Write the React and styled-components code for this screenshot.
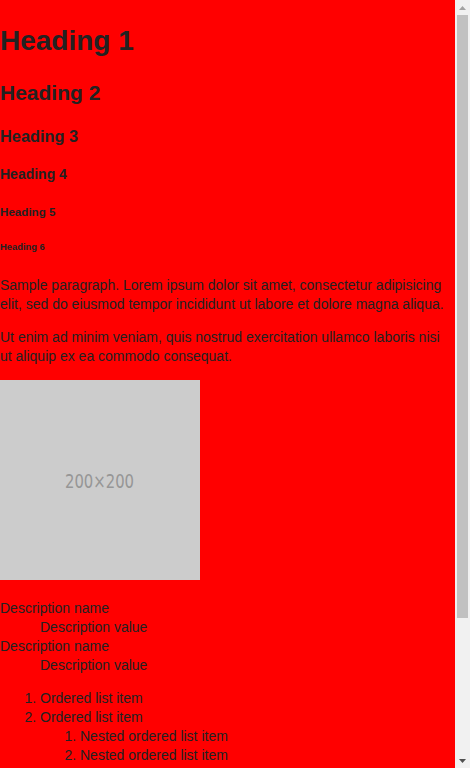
import styled, { createGlobalStyle } from 'styled-components';

const Global = createGlobalStyle`
  html, body { margin: 0; padding: 0; background: #f00; }
  body {
    font-family: "Liberation Sans", Arial, sans-serif;
    color: #222;
    font-size: 14px;
    line-height: 1.36;
  }
`;

// window frame: page content on the left, classic scrollbar on the right
const Frame = styled.div`
  display: flex;
  height: 100vh;
  overflow: hidden;
`;

const Page = styled.main`
  flex: 1;
  min-width: 0;
  overflow: hidden;
  padding-top: 3px;
  background: #f00;
`;

const ScrollBar = styled.div`
  width: 15px;
  flex: none;
  display: flex;
  flex-direction: column;
  background: #f1f1f1;
`;

const ArrowButton = styled.div`
  height: 15px;
  display: flex;
  align-items: center;
  justify-content: center;
  svg { display: block; }
`;

const Track = styled.div`
  flex: 1;
  display: flex;
  flex-direction: column;
`;

const Thumb = styled.div`
  height: 603px;
  margin: 0 2px;
  background: #c1c1c1;
`;

const Heading = styled.h1`font-weight: 700;`;

const Text = styled.p`margin: 1em 0;`;

const Placeholder = styled.svg`
  display: inline;
  vertical-align: baseline;
  text { font-family: "DejaVu Sans Condensed", "DejaVu Sans", sans-serif; }
`;

const DescList = styled.dl`margin: 1em 0;`;
const Term = styled.dt``;
const Detail = styled.dd`margin-left: 40px;`;

const OrderedList = styled.ol`
  margin: ${p => (p.$nested ? '0' : '1em 0')};
  padding-left: 40px;
`;
const UnorderedList = styled.ul`
  margin: ${p => (p.$nested ? '0' : '1em 0')};
  padding-left: 40px;
`;
const Item = styled.li``;

export default function App() {
  return (
    <Frame>
      <Global />
      <Page>
        <Heading as="h1">Heading 1</Heading>
        <Heading as="h2">Heading 2</Heading>
        <Heading as="h3">Heading 3</Heading>
        <Heading as="h4">Heading 4</Heading>
        <Heading as="h5">Heading 5</Heading>
        <Heading as="h6">Heading 6</Heading>

        <Text>
          Sample paragraph. Lorem ipsum dolor sit amet, consectetur adipisicing elit, sed do eiusmod tempor
          incididunt ut labore et dolore magna aliqua.
        </Text>
        <Text>Ut enim ad minim veniam, quis nostrud exercitation ullamco laboris nisi ut aliquip ex ea commodo consequat.</Text>

        <Text>
          <Placeholder width="200" height="200" viewBox="0 0 200 200">
            <rect width="200" height="200" fill="#ccc" />
            <text x="99.5" y="108" textAnchor="middle" fontSize="20" fill="#969696"
              textLength="69" lengthAdjust="spacingAndGlyphs">200×200</text>
          </Placeholder>
        </Text>

        <DescList>
          <Term>Description name</Term>
          <Detail>Description value</Detail>
          <Term>Description name</Term>
          <Detail>Description value</Detail>
        </DescList>

        <OrderedList>
          <Item>Ordered list item</Item>
          <Item>
            Ordered list item
            <OrderedList $nested>
              <Item>Nested ordered list item</Item>
              <Item>Nested ordered list item</Item>
            </OrderedList>
          </Item>
          <Item>Ordered list item</Item>
        </OrderedList>

        <UnorderedList>
          <Item>Unordered list item</Item>
          <Item>
            Unordered list item
            <UnorderedList $nested>
              <Item>Nested unordered list item</Item>
              <Item>Nested unordered list item</Item>
            </UnorderedList>
          </Item>
        </UnorderedList>
      </Page>

      <ScrollBar>
        <ArrowButton>
          <svg width="7" height="4" viewBox="0 0 7 4"><polygon points="3.5,0 7,4 0,4" fill="#a3a3a3" /></svg>
        </ArrowButton>
        <Track><Thumb /></Track>
        <ArrowButton>
          <svg width="7" height="4" viewBox="0 0 7 4"><polygon points="0,0 7,0 3.5,4" fill="#505050" /></svg>
        </ArrowButton>
      </ScrollBar>
    </Frame>
  );
}
